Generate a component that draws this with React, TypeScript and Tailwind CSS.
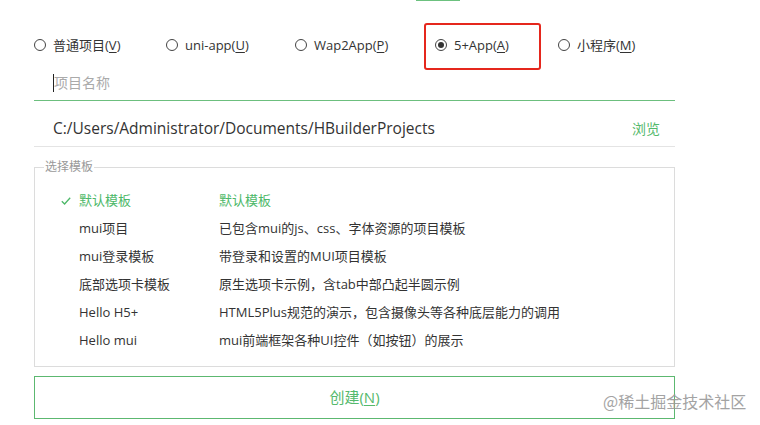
import React from "react";

const FONT = { fontFamily: '"Open Sans", "Noto Sans CJK SC", sans-serif' };

function Radio({ label, hot, checked, w }: { label: string; hot: string; checked?: boolean; w: string }) {
  return (
    <div className={`flex items-center shrink-0 ${w}`}>
      <span className="w-[12px] h-[12px] rounded-full border border-[#444] flex items-center justify-center shrink-0">
        {checked && <span className="w-[6px] h-[6px] rounded-full bg-[#333]" />}
      </span>
      <span className="ml-[7px] text-[13px] text-[#333] leading-none whitespace-nowrap">
        {label}(<span className="underline underline-offset-2">{hot}</span>)
      </span>
    </div>
  );
}

const rows: [string, string][] = [
  ["mui项目", "已包含mui的js、css、字体资源的项目模板"],
  ["mui登录模板", "带登录和设置的MUI项目模板"],
  ["底部选项卡模板", "原生选项卡示例，含tab中部凸起半圆示例"],
  ["Hello H5+", "HTML5Plus规范的演示，包含摄像头等各种底层能力的调用"],
  ["Hello mui", "mui前端框架各种UI控件（如按钮）的展示"],
];

export default function App() {
  return (
    <div className="w-[760px] h-[425px] bg-white relative overflow-hidden" style={FONT}>
      <div className="h-[3px] flex">
        <div className="ml-[416px] w-[44px] h-[1px] bg-[#6cc17f]" />
      </div>
      <div className="pl-[34px] w-[675px]">
        {/* radio row */}
        <div className="flex items-center -mt-[3px]" style={{ height: 90 }}>
          <Radio label="普通项目" hot="V" w="w-[132px]" />
          <Radio label="uni-app" hot="U" w="w-[129px]" />
          <Radio label="Wap2App" hot="P" w="w-[140px]" />
          <div className="relative w-[123px] shrink-0">
            <div className="absolute left-[-11px] top-[-16px] w-[117px] h-[47px] border-[2.5px] border-[#e5271d] rounded-[3px]" />
            <Radio label="5+App" hot="A" checked w="w-[123px]" />
          </div>
          <Radio label="小程序" hot="M" w="w-[100px]" />
        </div>
      </div>
      <div className="ml-[34px] w-[641px] -mt-[21px]">
        {/* project name */}
        <div className="h-[32px] border-b border-[#6cbf7e] flex items-start pt-[5px] pl-[19px]">
          <span className="w-[1px] h-[18px] bg-[#222]" />
          <span className="text-[14px] text-[#aaa] leading-[18px]">项目名称</span>
        </div>
        {/* path */}
        <div className="h-[46px] pt-[10px] border-b border-[#e4e4e4] flex items-center justify-between pl-[19px] pr-[15px]">
          <span className="text-[15.5px] text-[#333]">C:/Users/Administrator/Documents/HBuilderProjects</span>
          <span className="text-[14px] text-[#55b96c]">浏览</span>
        </div>
        {/* fieldset */}
        <fieldset className="mt-[14px] border border-[#dcdcdc] h-[206px] px-[9px] pt-[14px] m-0">
          <legend className="text-[12px] text-[#999] px-[1px] leading-none">选择模板</legend>
          <div className="flex flex-col">
            <div className="flex items-center h-[28px] text-[13px] text-[#4cb868]">
              <span className="w-[35px] pl-[17px] flex items-center">
                <svg width="10" height="8" viewBox="0 0 10 8">
                  <path d="M0.8 4.2 L3.6 7 L9.2 0.8" fill="none" stroke="#4cb868" strokeWidth="1.3" />
                </svg>
              </span>
              <span className="w-[140px]">默认模板</span>
              <span>默认模板</span>
            </div>
            {rows.map(([a, b]) => (
              <div key={a} className="flex items-center h-[28px] text-[13px] text-[#333]">
                <span className="w-[35px]" />
                <span className="w-[140px]">{a}</span>
                <span>{b}</span>
              </div>
            ))}
          </div>
        </fieldset>
        {/* button */}
        <div className="mt-[9px] h-[43px] border border-[#5cb870] flex items-center justify-center text-[15px] text-[#55b96c]">
          创建(<span className="underline underline-offset-2">N</span>)
        </div>
      </div>
      <div className="absolute left-[603px] top-[389px] text-[16px] text-[#9a9a9a] opacity-90 whitespace-nowrap" style={{ fontFamily: '"Noto Sans CJK SC", sans-serif' }}>
        @稀土掘金技术社区
      </div>
    </div>
  );
}
